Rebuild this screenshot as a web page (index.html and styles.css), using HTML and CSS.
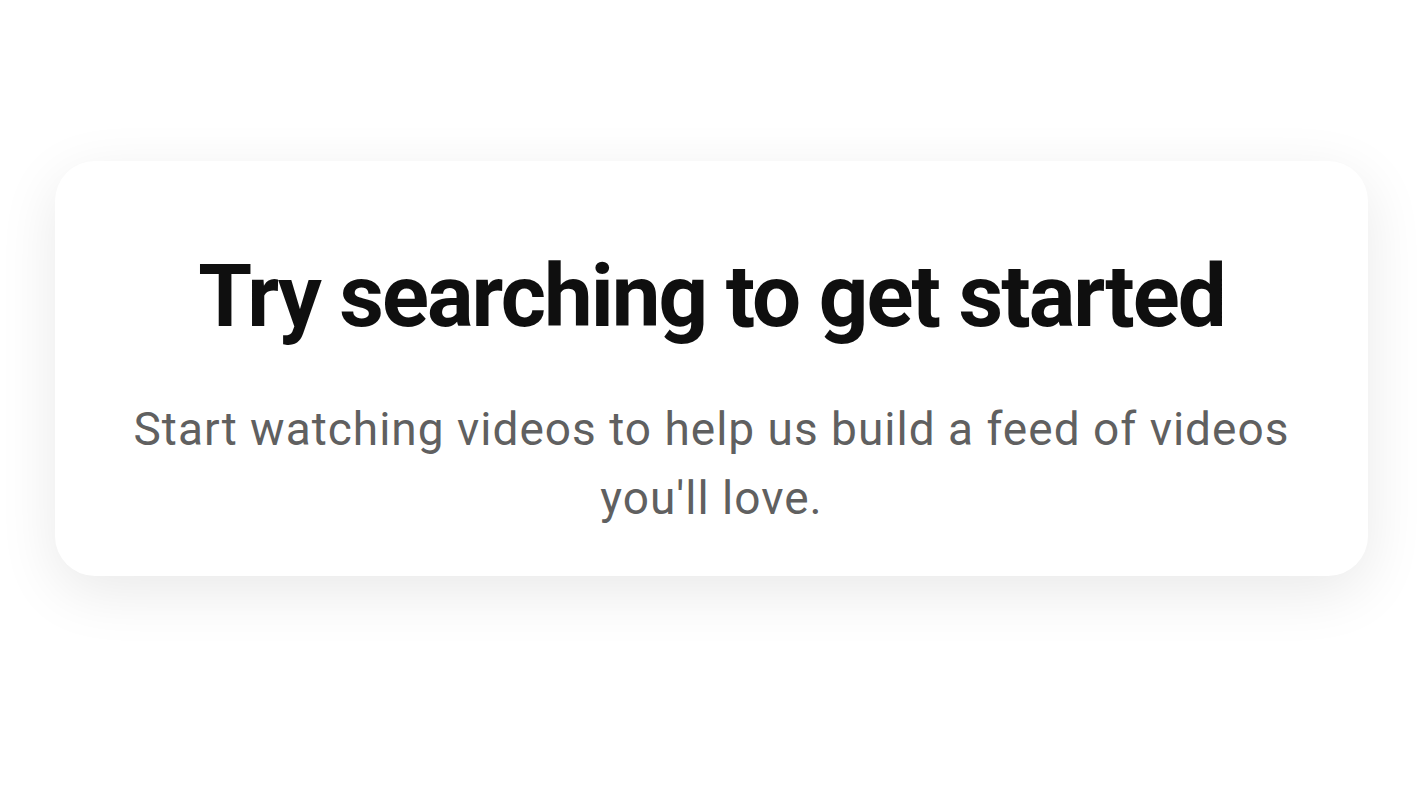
FILE: index.html
```html
<!DOCTYPE html>
<html lang="en">
<head>
    <meta charset="UTF-8">
    <meta name="viewport" content="width=device-width, initial-scale=1.0">
    <title>Try searching</title>
    <link rel="stylesheet" href="styles.css">
</head>
<body>
    <div class="page">
        <!-- Empty feed card -->
        <div class="empty-card">
            <h1 class="empty-title">Try searching to get started</h1>
            <p class="empty-text">Start watching videos to help us build a feed of videos you'll love.</p>
        </div>
    </div>
</body>
</html>
```

FILE: styles.css
```css
* {
    margin: 0;
    padding: 0;
    box-sizing: border-box;
    font-family: Roboto, "Liberation Sans", Arial, sans-serif;
}

body {
    background: #ffffff;
    min-height: 100vh;
}

.page {
    padding: 161px 54px 0 55px;
}

.empty-card {
    background: #ffffff;
    border-radius: 40px;
    box-shadow: 0 16px 60px rgba(0, 0, 0, 0.09);
    height: 415px;
    padding: 85px 60px 0;
    text-align: center;
}

.empty-title {
    color: #0f0f0f;
    font-size: 87px;
    font-weight: 700;
    line-height: 100px;
    letter-spacing: -2px;
}

.empty-text {
    color: #606060;
    font-size: 46px;
    font-weight: 400;
    line-height: 69px;
    letter-spacing: 1px;
    margin-top: 49px;
}
```
